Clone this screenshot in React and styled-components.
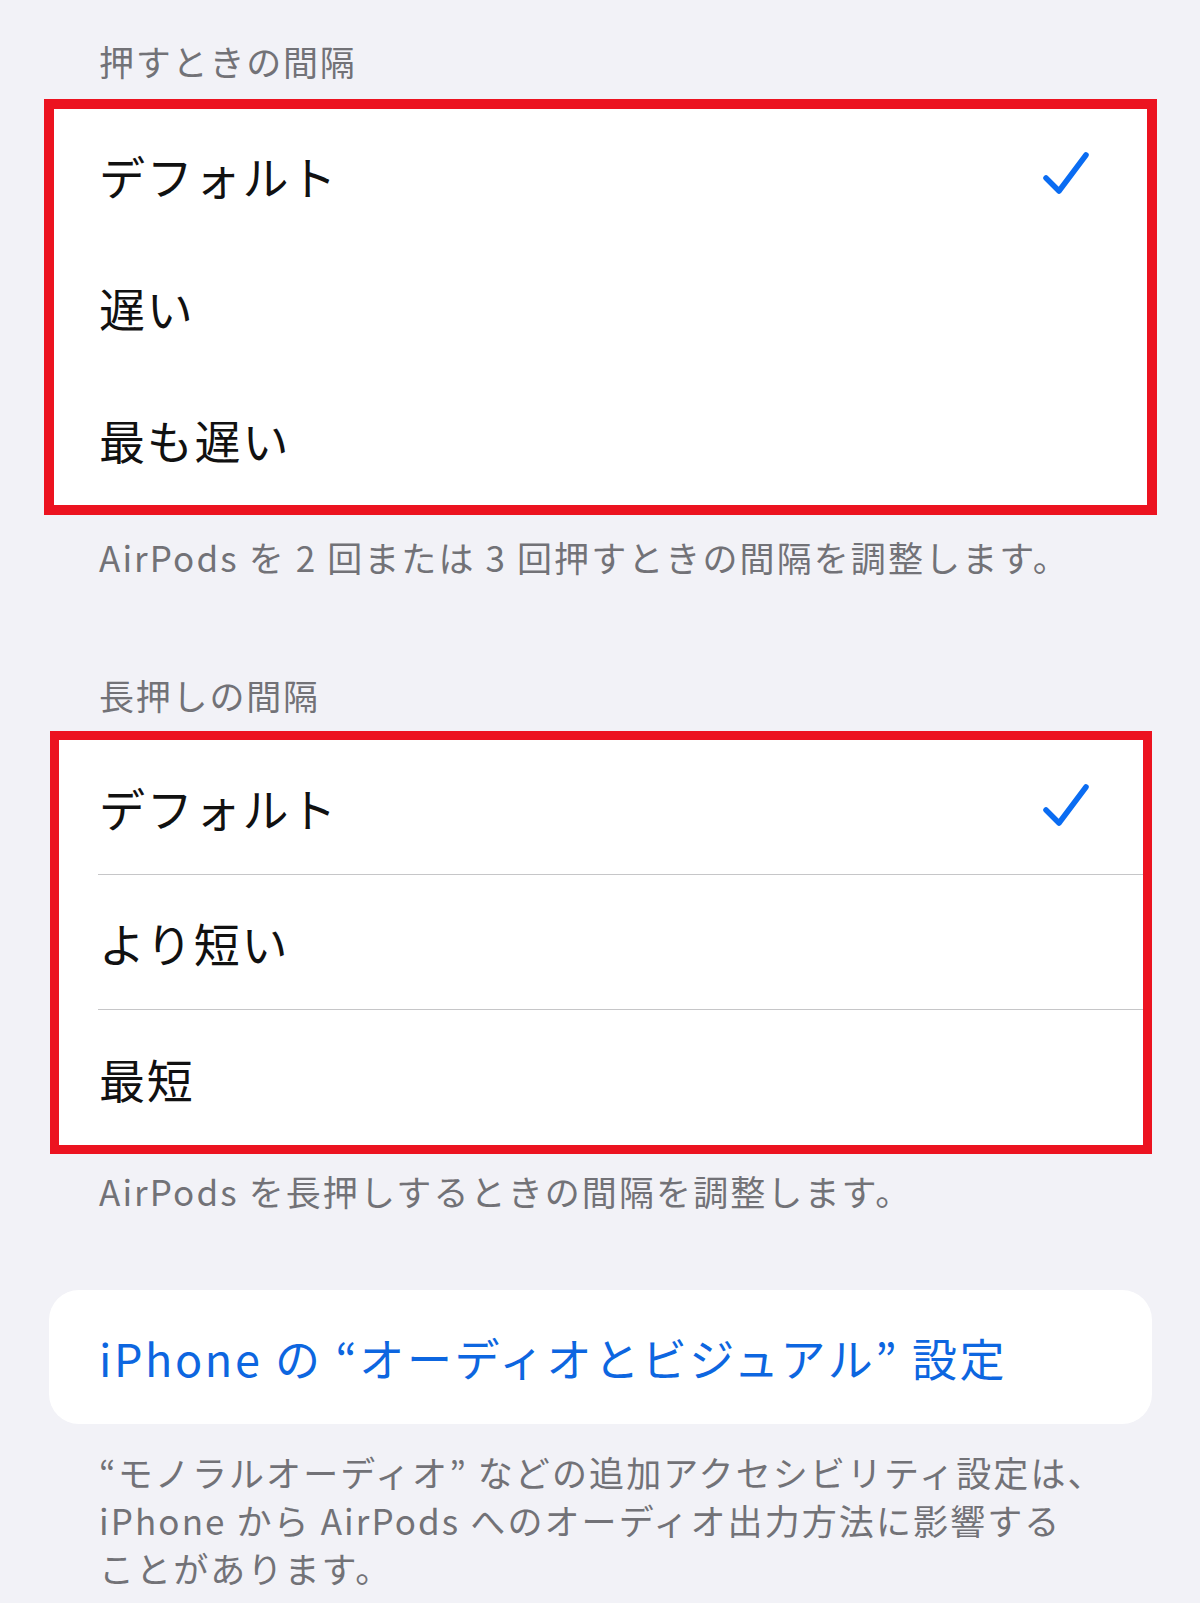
import React from "react";
import styled, { createGlobalStyle } from "styled-components";

const GlobalStyle = createGlobalStyle`
  html, body {
    margin: 0;
    padding: 0;
    background: #f2f2f7;
  }
  body {
    font-family: "Noto Sans CJK JP", "Noto Sans", sans-serif;
    -webkit-font-smoothing: antialiased;
  }
`;

const pressOptions = [
  { label: "デフォルト", checked: true },
  { label: "遅い" },
  { label: "最も遅い" }
];

const holdOptions = [
  { label: "デフォルト", checked: true },
  { label: "より短い" },
  { label: "最短" }
];

const Check = () => (
  <CheckIcon viewBox="0 0 48 44" aria-hidden="true">
    <path d="M4 27 L17 40 L44 4" />
  </CheckIcon>
);

const App = () => (
  <>
    <GlobalStyle />
    <Page>
      <SectionHeader $top={39}>押すときの間隔</SectionHeader>

      <Group $top={16} $left={44} $right={43} $border={10}>
        {pressOptions.map(option => (
          <Row key={option.label} $height={132} $left={45} $right={57}>
            <Label>{option.label}</Label>
            {option.checked && <Check />}
          </Row>
        ))}
      </Group>

      <Footer $top={20}>
        AirPods を 2 回または 3 回押すときの間隔を調整します。
      </Footer>

      <SectionHeader $top={94}>長押しの間隔</SectionHeader>

      <Group $top={14} $left={50} $right={48} $border={9}>
        {holdOptions.map((option, i) => (
          <React.Fragment key={option.label}>
            {i > 0 && <Separator />}
            <Row $height={i === 2 ? 135 : 134} $left={40} $right={53}>
              <Label>{option.label}</Label>
              {option.checked && <Check />}
            </Row>
          </React.Fragment>
        ))}
      </Group>

      <Footer $top={15}>AirPods を長押しするときの間隔を調整します。</Footer>

      <LinkCard>
        <LinkText>iPhone の “オーディオとビジュアル” 設定</LinkText>
      </LinkCard>

      <Footer $top={24} $lineHeight={48}>
        “モノラルオーディオ” などの追加アクセシビリティ設定は、
        <br />
        iPhone から AirPods へのオーディオ出力方法に影響する
        <br />
        ことがあります。
      </Footer>
    </Page>
  </>
);

// Styled components
const Page = styled.div`
  width: 1200px;
  min-height: 1603px;
  box-sizing: border-box;
  display: flex;
  flex-direction: column;
  background: #f2f2f7;
  overflow: hidden;
`;

const SectionHeader = styled.div`
  margin-top: ${p => p.$top}px;
  padding-left: 99px;
  font-size: 35px;
  line-height: 44px;
  letter-spacing: 1.8px;
  color: #727277;
  white-space: nowrap;
`;

const Footer = styled.div`
  margin-top: ${p => p.$top}px;
  padding-left: 99px;
  font-size: 35px;
  line-height: ${p => p.$lineHeight || 44}px;
  letter-spacing: 2.1px;
  color: #727277;
  white-space: nowrap;
`;

const Group = styled.div`
  margin: ${p => p.$top}px ${p => p.$right}px 0 ${p => p.$left}px;
  border: ${p => p.$border}px solid #ec1320;
  background: #ffffff;
  display: flex;
  flex-direction: column;
`;

const Row = styled.div`
  height: ${p => p.$height}px;
  padding: 0 ${p => p.$right}px 0 ${p => p.$left}px;
  display: flex;
  align-items: center;
  justify-content: space-between;
`;

const Label = styled.span`
  font-size: 46px;
  line-height: 1;
  letter-spacing: 1.8px;
  color: #111111;
  white-space: nowrap;
`;

const Separator = styled.div`
  height: 1px;
  margin-left: 39px;
  background: #c6c6c8;
`;

const CheckIcon = styled.svg`
  width: 48px;
  height: 44px;
  margin-top: -4px;
  flex-shrink: 0;

  path {
    fill: none;
    stroke: #0a6cf2;
    stroke-width: 5.5;
    stroke-linecap: round;
    stroke-linejoin: round;
  }
`;

const LinkCard = styled.div`
  margin: 77px 48px 0 49px;
  height: 134px;
  border-radius: 30px;
  background: #ffffff;
  padding-left: 50px;
  display: flex;
  align-items: center;
`;

const LinkText = styled.span`
  font-size: 45px;
  line-height: 1;
  letter-spacing: 2.6px;
  color: #0d66e0;
  white-space: nowrap;
`;

export default App;
